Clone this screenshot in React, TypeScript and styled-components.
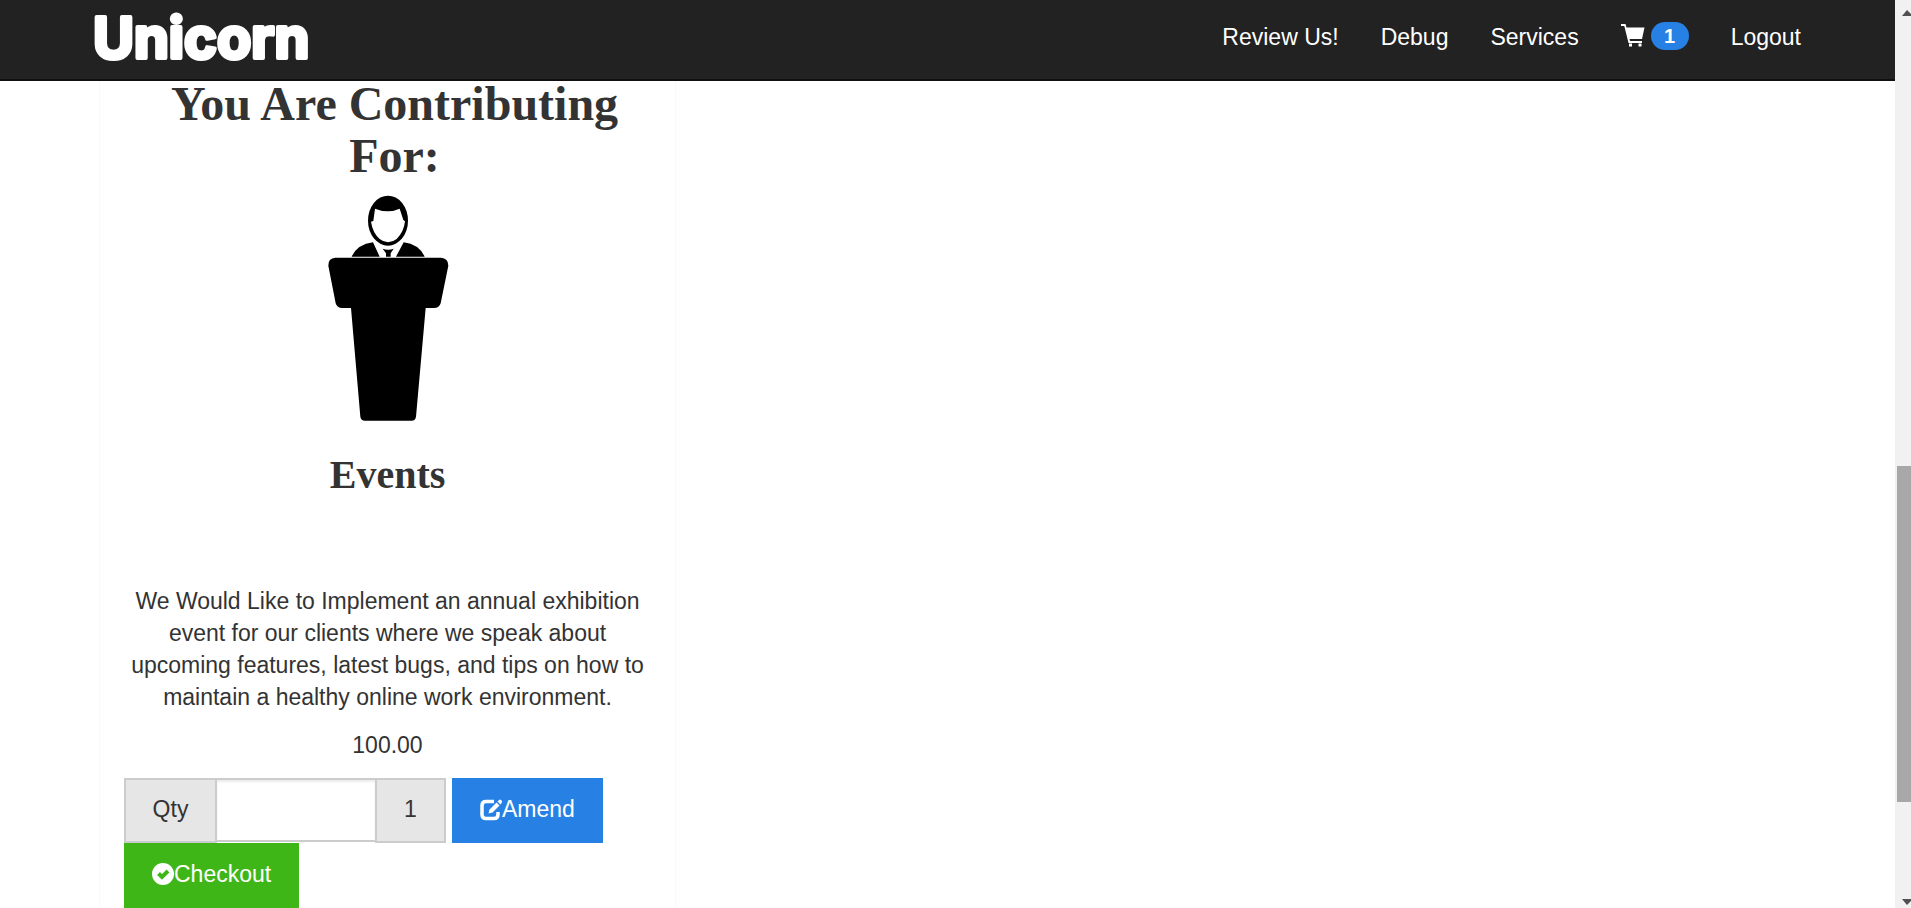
import React from 'react';
import styled, { createGlobalStyle } from 'styled-components';

const GlobalStyle = createGlobalStyle`
  *, *::before, *::after { box-sizing: border-box; }
  body {
    margin: 0;
    background: #fff;
    color: #333;
    font-family: "Liberation Sans", Arial, sans-serif;
    font-size: 23px;
    line-height: 32px;
  }
`;

const Shell = styled.div`
  display: flex;
  height: 100vh;
  overflow: hidden;
`;

const Page = styled.div`
  flex: 1;
  min-width: 0;
`;

const Navbar = styled.header`
  position: relative;
  z-index: 1;
  height: 81px;
  padding: 0 73px 0 90px;
  background: #222;
  border-bottom: 2px solid #101010;
  display: flex;
  justify-content: space-between;
`;

const Brand = styled.a`
  display: block;
  svg { display: block; }
`;

const LogoText = styled.text`
  font-family: Inter, "Open Sans", sans-serif;
  font-size: 56px;
  font-weight: 700;
  fill: #fff;
  stroke: #fff;
  stroke-width: 4px;
  stroke-linejoin: round;
`;

const NavLinks = styled.nav`
  display: flex;
  align-items: flex-start;
  padding-top: 21px;
`;

const NavLink = styled.a`
  display: flex;
  padding: 0 21px;
  color: #fff;
  text-decoration: none;
`;

const Badge = styled.span`
  height: 28px;
  min-width: 38px;
  margin-left: 6px;
  margin-top: 1px;
  border-radius: 14px;
  background: #2780e3;
  font-size: 20px;
  font-weight: bold;
  line-height: 28px;
  text-align: center;
`;

const Container = styled.main`
  padding: 0 99px;
`;

const Card = styled.section`
  width: 577px;
  min-height: 830px;
  padding: 0 24px;
  border: solid #f9f9f9;
  border-width: 0 1px;
  text-align: center;
`;

const Title = styled.h1`
  margin: -3px 0 0;
  padding: 0 0 0 14px;
  font-family: "Liberation Serif", serif;
  font-size: 48px;
  line-height: 52px;
`;

const Figure = styled.svg`
  display: block;
  margin: 13px auto 0;
`;

const CardName = styled.h2`
  margin: 28px 0 0;
  font-family: "Liberation Serif", serif;
  font-size: 40px;
  line-height: 48px;
`;

const Description = styled.p`
  margin: 86px 0 0;
`;

const Price = styled.p`
  margin: 16px 0 17px;
`;

const Actions = styled.form`
  display: flex;
  flex-wrap: wrap;
  column-gap: 6px;
`;

const QtyGroup = styled.div`
  display: flex;
  align-items: flex-start;
`;

const Addon = styled.label<{ $width: number }>`
  width: ${(p) => p.$width}px;
  height: 65px;
  border: 2px solid #ccc;
  background: #e6e6e6;
  line-height: 59px;
`;

const QtyInput = styled.input`
  width: 162px;
  height: 64px;
  margin: 0 -2px;
  padding: 0 27px;
  border: 2px solid #ccc;
  border-radius: 0;
  box-shadow: inset 0 2px 2px rgba(0, 0, 0, 0.075);
  color: #333;
  font: inherit;
  outline: none;
`;

const Button = styled.button<{ $tone: string }>`
  height: 65px;
  padding: 0 28px 3px;
  display: flex;
  align-items: center;
  border: 0;
  background: ${(p) => p.$tone};
  color: #fff;
  font: inherit;
`;

const Scrollbar = styled.div`
  width: 16px;
  background: #f1f1f1;
  display: flex;
  flex-direction: column;
  align-items: flex-end;
  padding: 10px 0 3px;
  svg { display: block; flex: none; }
`;

const Track = styled.div<{ $share: number }>`
  flex: ${(p) => p.$share} 0 0;
`;

const Thumb = styled(Track)`
  width: 14px;
  background: #a8a8a8;
`;

const CartIcon = () => (
  <svg width="24" height="32" viewBox="0 0 24 32" fill="#fff" aria-hidden="true">
    <path d="M0 3H4.500L5.500 6.500H23.500L21 18H8.500L9 20H21V22H7.500L3.300 5H0Z" />
    <path d="M8 22.500h3v3H8ZM17.500 22.500h3v3h-3Z" />
  </svg>
);

const EditIcon = () => (
  <svg width="22" height="23" viewBox="0 0 22 23" aria-hidden="true">
    <path d="M14 3.500H6Q2 3.500 2 7.500v9q0 4 4 4h8q4 0 4-4V14" fill="none" stroke="#fff" strokeWidth="3.500" />
    <path d="M8.500 15.500L9.500 11.500L16.500 4.500L19.500 7.500L12.500 14.500Z M17.500 3.500L19 2Q20 1 21 2L22 3Q22.500 4 21.500 5L20.500 6.500Z" fill="#fff" />
  </svg>
);

const OkIcon = ({ tone }: { tone: string }) => (
  <svg width="22" height="23" viewBox="0 0 22 23" aria-hidden="true">
    <circle cx="11" cy="11" r="11" fill="#fff" />
    <path d="M6.500 10.500l3.500 3.500 6-6" fill="none" stroke={tone} strokeWidth="4" />
  </svg>
);

const Speaker = () => (
  <Figure width="128" height="228" viewBox="40 45 384 684" role="img" aria-label="Speaker at a podium">
    <ellipse cx="232" cy="122" rx="60" ry="75" />
    <path d="M193 86Q232 102 267 86L278 120L283 124Q280 155 258 177Q232 197 207 177Q186 158 181 125L188 123Z" fill="#fff" />
    <path d="M123 230Q140 193 187 187L207 230ZM342 230Q325 193 279 187L256 230Z" />
    <path d="M216 206Q232 212 249 206L240 220V230H226V220Z" />
    <path d="M74 233H391Q413 234 413 257L390 370Q386 384 370 384H345L316 710Q314 722 303 722H163Q151 722 149 710L121 384H95Q79 384 75 370L53 257Q52 234 74 233Z" />
  </Figure>
);

const PRIMARY = '#2780e3';
const SUCCESS = '#3fb618';

export default function App() {
  return (
    <>
      <GlobalStyle />
      <Shell>
        <Page>
          <Navbar>
            <Brand href="#" aria-label="Unicorn">
              <svg width="260" height="79">
                <LogoText x="3" y="58">Unicorn</LogoText>
              </svg>
            </Brand>
            <NavLinks>
              <NavLink href="#">Review Us!</NavLink>
              <NavLink href="#">Debug</NavLink>
              <NavLink href="#">Services</NavLink>
              <NavLink href="#"><CartIcon /><Badge>1</Badge></NavLink>
              <NavLink href="#">Logout</NavLink>
            </NavLinks>
          </Navbar>
          <Container>
            <Card>
              <Title>You Are Contributing For:</Title>
              <Speaker />
              <CardName>Events</CardName>
              <Description>
                We Would Like to Implement an annual exhibition event for our clients where we speak about
                upcoming features, latest bugs, and tips on how to maintain a healthy online work environment.
              </Description>
              <Price>100.00</Price>
              <Actions onSubmit={(e) => e.preventDefault()}>
                <QtyGroup>
                  <Addon htmlFor="qty" $width={93}>Qty</Addon>
                  <QtyInput id="qty" type="text" />
                  <Addon htmlFor="qty" $width={71}>1</Addon>
                </QtyGroup>
                <Button type="submit" $tone={PRIMARY}><EditIcon />Amend</Button>
                <Button type="button" $tone={SUCCESS}><OkIcon tone={SUCCESS} />Checkout</Button>
              </Actions>
            </Card>
          </Container>
        </Page>
        <Scrollbar aria-hidden="true">
          <svg width="9" height="6"><path d="M0 6L5 0L9 4V6Z" fill="#505050" /></svg>
          <Track $share={450} />
          <Thumb $share={336} />
          <Track $share={97} />
          <svg width="9" height="6"><path d="M0 0H9V2L5 6Z" fill="#505050" /></svg>
        </Scrollbar>
      </Shell>
    </>
  );
}
